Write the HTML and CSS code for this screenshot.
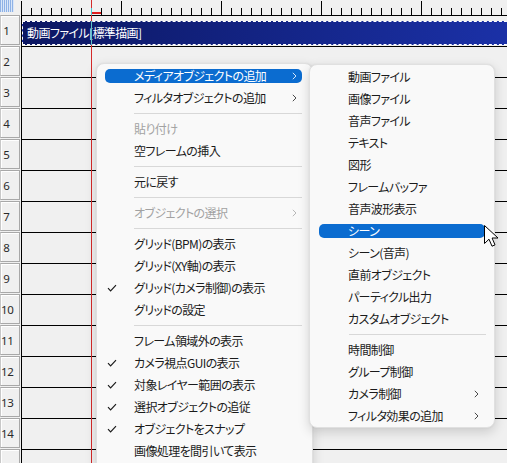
FILE: index.html
```html
<!DOCTYPE html>
<html lang="ja">
<head>
<meta charset="utf-8">
<title>Timeline</title>
<link rel="stylesheet" href="styles.css">
</head>
<body>
<div class="timeline">
  <div class="corner"></div>
  <div class="ruler"></div>
  <div class="heads">
    <div class="head"><div class="head-box"><span>1</span></div></div>
    <div class="head"><div class="head-box"><span>2</span></div></div>
    <div class="head"><div class="head-box"><span>3</span></div></div>
    <div class="head"><div class="head-box"><span>4</span></div></div>
    <div class="head"><div class="head-box"><span>5</span></div></div>
    <div class="head"><div class="head-box"><span>6</span></div></div>
    <div class="head"><div class="head-box"><span>7</span></div></div>
    <div class="head"><div class="head-box"><span>8</span></div></div>
    <div class="head"><div class="head-box"><span>9</span></div></div>
    <div class="head"><div class="head-box"><span>10</span></div></div>
    <div class="head"><div class="head-box"><span>11</span></div></div>
    <div class="head"><div class="head-box"><span>12</span></div></div>
    <div class="head"><div class="head-box"><span>13</span></div></div>
    <div class="head"><div class="head-box"><span>14</span></div></div>
    <div class="head"><div class="head-box"></div></div>
  </div>
  <div class="tracks">
    <div class="track"><div class="clip">動画ファイル[標準描画]</div></div>
    <div class="track"></div>
    <div class="track"></div>
    <div class="track"></div>
    <div class="track"></div>
    <div class="track"></div>
    <div class="track"></div>
    <div class="track"></div>
    <div class="track"></div>
    <div class="track"></div>
    <div class="track"></div>
    <div class="track"></div>
    <div class="track"></div>
    <div class="track"></div>
    <div class="track"></div>
  </div>
</div>

<div class="playhead">
  <div class="ph-cyan-top"></div>
  <div class="ph-cyan-clip"></div>
</div>
<div class="ph-mark"></div>

<div class="menu menu-main">
  <div class="item hl"><span class="chk"></span><span class="lbl">メディアオブジェクトの追加</span><svg class="arr" width="5" height="8" viewBox="0 0 5 8"><path d="M0.8 0.8 L4 4 L0.8 7.2" fill="none" stroke="currentColor" stroke-width="1"/></svg></div>
  <div class="item"><span class="chk"></span><span class="lbl">フィルタオブジェクトの追加</span><svg class="arr" width="5" height="8" viewBox="0 0 5 8"><path d="M0.8 0.8 L4 4 L0.8 7.2" fill="none" stroke="currentColor" stroke-width="1"/></svg></div>
  <div class="sep"></div>
  <div class="item dis"><span class="chk"></span><span class="lbl">貼り付け</span></div>
  <div class="item"><span class="chk"></span><span class="lbl">空フレームの挿入</span></div>
  <div class="sep"></div>
  <div class="item"><span class="chk"></span><span class="lbl">元に戻す</span></div>
  <div class="sep"></div>
  <div class="item dis"><span class="chk"></span><span class="lbl">オブジェクトの選択</span><svg class="arr" width="5" height="8" viewBox="0 0 5 8"><path d="M0.8 0.8 L4 4 L0.8 7.2" fill="none" stroke="currentColor" stroke-width="1"/></svg></div>
  <div class="sep"></div>
  <div class="item"><span class="chk"></span><span class="lbl">グリッド(BPM)の表示</span></div>
  <div class="item"><span class="chk"></span><span class="lbl">グリッド(XY軸)の表示</span></div>
  <div class="item"><span class="chk"><svg width="10" height="8" viewBox="0 0 10 8"><path d="M1 4.2 L3.6 6.8 L9 1.2" fill="none" stroke="currentColor" stroke-width="1.2"/></svg></span><span class="lbl">グリッド(カメラ制御)の表示</span></div>
  <div class="item"><span class="chk"></span><span class="lbl">グリッドの設定</span></div>
  <div class="sep"></div>
  <div class="item"><span class="chk"></span><span class="lbl">フレーム領域外の表示</span></div>
  <div class="item"><span class="chk"><svg width="10" height="8" viewBox="0 0 10 8"><path d="M1 4.2 L3.6 6.8 L9 1.2" fill="none" stroke="currentColor" stroke-width="1.2"/></svg></span><span class="lbl">カメラ視点GUIの表示</span></div>
  <div class="item"><span class="chk"><svg width="10" height="8" viewBox="0 0 10 8"><path d="M1 4.2 L3.6 6.8 L9 1.2" fill="none" stroke="currentColor" stroke-width="1.2"/></svg></span><span class="lbl">対象レイヤー範囲の表示</span></div>
  <div class="item"><span class="chk"><svg width="10" height="8" viewBox="0 0 10 8"><path d="M1 4.2 L3.6 6.8 L9 1.2" fill="none" stroke="currentColor" stroke-width="1.2"/></svg></span><span class="lbl">選択オブジェクトの追従</span></div>
  <div class="item"><span class="chk"><svg width="10" height="8" viewBox="0 0 10 8"><path d="M1 4.2 L3.6 6.8 L9 1.2" fill="none" stroke="currentColor" stroke-width="1.2"/></svg></span><span class="lbl">オブジェクトをスナップ</span></div>
  <div class="item"><span class="chk"></span><span class="lbl">画像処理を間引いて表示</span></div>
</div>

<div class="menu menu-sub">
  <div class="item"><span class="chk"></span><span class="lbl">動画ファイル</span></div>
  <div class="item"><span class="chk"></span><span class="lbl">画像ファイル</span></div>
  <div class="item"><span class="chk"></span><span class="lbl">音声ファイル</span></div>
  <div class="item"><span class="chk"></span><span class="lbl">テキスト</span></div>
  <div class="item"><span class="chk"></span><span class="lbl">図形</span></div>
  <div class="item"><span class="chk"></span><span class="lbl">フレームバッファ</span></div>
  <div class="item"><span class="chk"></span><span class="lbl">音声波形表示</span></div>
  <div class="item hl"><span class="chk"></span><span class="lbl">シーン</span></div>
  <div class="item"><span class="chk"></span><span class="lbl">シーン(音声)</span></div>
  <div class="item"><span class="chk"></span><span class="lbl">直前オブジェクト</span></div>
  <div class="item"><span class="chk"></span><span class="lbl">パーティクル出力</span></div>
  <div class="item"><span class="chk"></span><span class="lbl">カスタムオブジェクト</span></div>
  <div class="sep"></div>
  <div class="item"><span class="chk"></span><span class="lbl">時間制御</span></div>
  <div class="item"><span class="chk"></span><span class="lbl">グループ制御</span></div>
  <div class="item"><span class="chk"></span><span class="lbl">カメラ制御</span><svg class="arr" width="5" height="8" viewBox="0 0 5 8"><path d="M0.8 0.8 L4 4 L0.8 7.2" fill="none" stroke="currentColor" stroke-width="1"/></svg></div>
  <div class="item"><span class="chk"></span><span class="lbl">フィルタ効果の追加</span><svg class="arr" width="5" height="8" viewBox="0 0 5 8"><path d="M0.8 0.8 L4 4 L0.8 7.2" fill="none" stroke="currentColor" stroke-width="1"/></svg></div>
</div>

<svg class="cursor" width="16" height="24" viewBox="0 0 16 24"><path d="M0.5 0.5 L0.5 18.5 L5 14.2 L8 21.2 L11 19.9 L8.1 13 L14 13 Z" fill="#fff" stroke="#000" stroke-width="1" stroke-linejoin="round"/></svg>
</body>
</html>
```
FILE: styles.css
```css
* { box-sizing: border-box; }
html, body { margin: 0; }
body {
  width: 507px;
  height: 463px;
  overflow: hidden;
  position: relative;
  background: #f0f0f0;
  font-family: "Noto Sans CJK JP", "Noto Sans", sans-serif;
}

.timeline {
  display: grid;
  grid-template-columns: 21px 1fr;
  grid-template-rows: 15px 1fr;
  height: 463px;
  overflow: hidden;
}

.corner {
  background:
    repeating-linear-gradient(90deg, #8fb2e6 0 1px, #d9e6f8 1px 2px) 0 0 / 14px 12px no-repeat,
    #f0f0f0;
}

.ruler {
  background:
    repeating-linear-gradient(90deg, #000 0 1px, transparent 1px 100px) 0 1px / 100% 14px no-repeat,
    repeating-linear-gradient(90deg, #000 0 1px, transparent 1px 10px) 0 8px / 100% 7px no-repeat,
    #f0f0f0;
}

.heads {
  display: flex;
  flex-direction: column;
}
.head {
  flex: none;
  height: 31px;
  padding-bottom: 1px;
}
.head-box {
  width: 20px;
  height: 30px;
  border: 1px solid #a8a8a8;
  border-left-color: #c8c8c8;
  box-shadow: inset 1px 1px #ffffff;
  background: #f0f0f0;
  display: flex;
  align-items: center;
  font-family: "Noto Sans", "DejaVu Sans", sans-serif;
  font-size: 11.5px;
  color: #2a2a2a;
}
.head-box span {
  width: 11px;
  text-align: center;
  white-space: nowrap;
  letter-spacing: -0.3px;
}

.tracks {
  display: flex;
  flex-direction: column;
  border-left: 1px solid #000;
  overflow: hidden;
}
.track {
  flex: none;
  height: 31px;
  border-top: 1px solid #000;
}
.clip {
  margin-top: 5px;
  height: 24px;
  width: calc(100% + 10px);
  background: linear-gradient(90deg, #0c1762, #1b31a8);
  border: 1px dashed #ffffff;
  color: #ffffff;
  font-size: 12px;
  line-height: 21px;
  padding-left: 4px;
  white-space: nowrap;
  font-feature-settings: "palt";
  letter-spacing: -0.6px;
}

.playhead {
  position: absolute;
  left: 91px;
  top: 0;
  width: 1px;
  height: 463px;
  background: #d42a2a;
}
.ph-cyan-top {
  position: absolute;
  left: 0;
  top: 8px;
  width: 1px;
  height: 7px;
  background: #48c6cf;
}
.ph-cyan-clip {
  position: absolute;
  left: 0;
  top: 21px;
  width: 1px;
  height: 24px;
  background: #5fc3c8;
}
.ph-mark {
  position: absolute;
  left: 92px;
  top: 12px;
  width: 9px;
  height: 2px;
  background: #e01c1c;
}

.menu {
  position: absolute;
  display: flex;
  flex-direction: column;
  background: #f9f9f9;
  border: 1px solid #e0e0e0;
  border-radius: 8px;
  box-shadow: 0 4px 12px rgba(0, 0, 0, 0.16), 0 0 2px rgba(0, 0, 0, 0.06);
  font-size: 12px;
  color: #1b1b1b;
  font-feature-settings: "palt";
  letter-spacing: -0.6px;
  padding: 1px 0;
}
.menu-main {
  left: 96px;
  top: 63px;
  width: 217px;
  height: 440px;
}
.menu-sub {
  left: 309px;
  top: 64px;
  width: 186px;
  padding: 1px 0 0;
}

.item {
  flex: none;
  height: 14px;
  margin: 4px 10px 4px 8px;
  border-radius: 5px;
  display: grid;
  grid-template-columns: 29px 1fr auto;
  align-items: center;
  line-height: 14px;
  white-space: nowrap;
}
.menu-sub .item {
  margin: 4px 9px 4px 9px;
}
.item.hl {
  background: #0b6cd0;
  color: #ffffff;
}
.item.dis {
  color: #a2a2a2;
}
.chk {
  display: flex;
  align-items: center;
  padding-left: 2px;
  height: 14px;
}
.arr {
  margin-right: 5px;
  color: #4a4a4a;
}
.menu-sub .arr {
  margin-right: 6px;
}
.item.hl .arr { color: #d6e6f8; }
.item.dis .arr { color: #b8b8b8; }

.sep {
  flex: none;
  height: 1px;
  margin: 4px 10px 4px 37px;
  background: #d8d8d8;
}
.menu-sub .sep {
  margin: 4px 8px 4px 39px;
}

.cursor {
  position: absolute;
  left: 484px;
  top: 225px;
}
```
